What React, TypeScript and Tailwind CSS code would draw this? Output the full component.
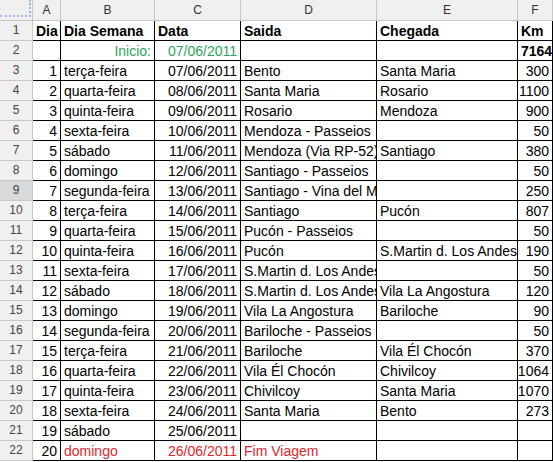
import React from "react"

type Row = {
  n: number
  a?: string
  b?: string
  c?: string
  d?: string
  e?: string
  f?: string
  tone?: "green" | "red"
  bold?: boolean
}

const rows: Row[] = [
  { n: 1, a: "Dia", b: "Dia Semana", c: "Data", d: "Saida", e: "Chegada", f: "Km", bold: true },
  { n: 2, b: "Inicio:", c: "07/06/2011", f: "7164", tone: "green" },
  { n: 3, a: "1", b: "terça-feira", c: "07/06/2011", d: "Bento", e: "Santa Maria", f: "300" },
  { n: 4, a: "2", b: "quarta-feira", c: "08/06/2011", d: "Santa Maria", e: "Rosario", f: "1100" },
  { n: 5, a: "3", b: "quinta-feira", c: "09/06/2011", d: "Rosario", e: "Mendoza", f: "900" },
  { n: 6, a: "4", b: "sexta-feira", c: "10/06/2011", d: "Mendoza - Passeios", f: "50" },
  { n: 7, a: "5", b: "sábado", c: "11/06/2011", d: "Mendoza (Via RP-52)", e: "Santiago", f: "380" },
  { n: 8, a: "6", b: "domingo", c: "12/06/2011", d: "Santiago - Passeios", f: "50" },
  { n: 9, a: "7", b: "segunda-feira", c: "13/06/2011", d: "Santiago - Vina del Mar", f: "250" },
  { n: 10, a: "8", b: "terça-feira", c: "14/06/2011", d: "Santiago", e: "Pucón", f: "807" },
  { n: 11, a: "9", b: "quarta-feira", c: "15/06/2011", d: "Pucón - Passeios", f: "50" },
  { n: 12, a: "10", b: "quinta-feira", c: "16/06/2011", d: "Pucón", e: "S.Martin d. Los Andes", f: "190" },
  { n: 13, a: "11", b: "sexta-feira", c: "17/06/2011", d: "S.Martin d. Los Andes", f: "50" },
  { n: 14, a: "12", b: "sábado", c: "18/06/2011", d: "S.Martin d. Los Andes", e: "Vila La Angostura", f: "120" },
  { n: 15, a: "13", b: "domingo", c: "19/06/2011", d: "Vila La Angostura", e: "Bariloche", f: "90" },
  { n: 16, a: "14", b: "segunda-feira", c: "20/06/2011", d: "Bariloche - Passeios", f: "50" },
  { n: 17, a: "15", b: "terça-feira", c: "21/06/2011", d: "Bariloche", e: "Vila Él Chocón", f: "370" },
  { n: 18, a: "16", b: "quarta-feira", c: "22/06/2011", d: "Vila Él Chocón", e: "Chivilcoy", f: "1064" },
  { n: 19, a: "17", b: "quinta-feira", c: "23/06/2011", d: "Chivilcoy", e: "Santa Maria", f: "1070" },
  { n: 20, a: "18", b: "sexta-feira", c: "24/06/2011", d: "Santa Maria", e: "Bento", f: "273" },
  { n: 21, a: "19", b: "sábado", c: "25/06/2011" },
  { n: 22, a: "20", b: "domingo", c: "26/06/2011", d: "Fim Viagem", tone: "red" },
]

const cell = "h-[20px] border-r border-b border-black overflow-hidden whitespace-nowrap px-[3px] leading-[20px]"

function Cell({ text, right, className = "" }: { text?: string; right?: boolean; className?: string }) {
  return (
    <div className={`${cell} ${right ? "flex justify-end" : ""} ${className}`}>
      <span className="shrink-0">{text}</span>
    </div>
  )
}

export default function App() {
  return (
    <div className="w-[553px] h-[462px] overflow-hidden bg-white font-['Liberation_Sans',Arial,sans-serif] text-[14px] text-black">
      <div className="grid grid-cols-[33px_28px_94px_86px_136px_141px_35px] auto-rows-[20px] [grid-template-rows:21px]">
        <div className="relative h-[21px] border-r border-b border-[#c8c8c8] bg-[#f0f0f0]">
          <div className="absolute left-0 top-[15px] w-[31px] border-t-2 border-dotted border-[#9db8e4]" />
          <div className="absolute left-[29px] top-0 h-[17px] border-l-2 border-dotted border-[#9db8e4]" />
        </div>
        {["A", "B", "C", "D", "E", "F"].map((h) => (
          <div key={h} className="h-[21px] border-r border-b border-[#c8c8c8] bg-[#f0f0f0] text-center text-[12px] leading-[21px] text-[#333]">
            {h}
          </div>
        ))}

        {rows.map((r) => {
          const tone = r.tone === "green" ? "text-[#2ea55a]" : r.tone === "red" ? "text-[#e3262b]" : ""
          const w = r.bold ? "font-bold" : ""
          return (
            <React.Fragment key={r.n}>
              <div className={`h-[20px] border-r border-b border-[#c8c8c8] text-center text-[12px] leading-[18px] text-[#444] ${r.n === 9 ? "bg-[#d9d9d9]" : "bg-[#f0f0f0]"}`}>
                {r.n}
              </div>
              <Cell text={r.a} right={!r.bold} className={w} />
              <Cell text={r.b} right={r.n === 2} className={`${w} ${tone}`} />
              <Cell text={r.c} right={!r.bold} className={`${w} ${tone}`} />
              <Cell text={r.d} className={`${w} ${tone}`} />
              <Cell text={r.e} className={w} />
              <Cell text={r.f} right={!r.bold && r.n !== 2} className={`${w} ${r.n === 2 ? "font-bold" : ""}`} />
            </React.Fragment>
          )
        })}
      </div>
    </div>
  )
}
